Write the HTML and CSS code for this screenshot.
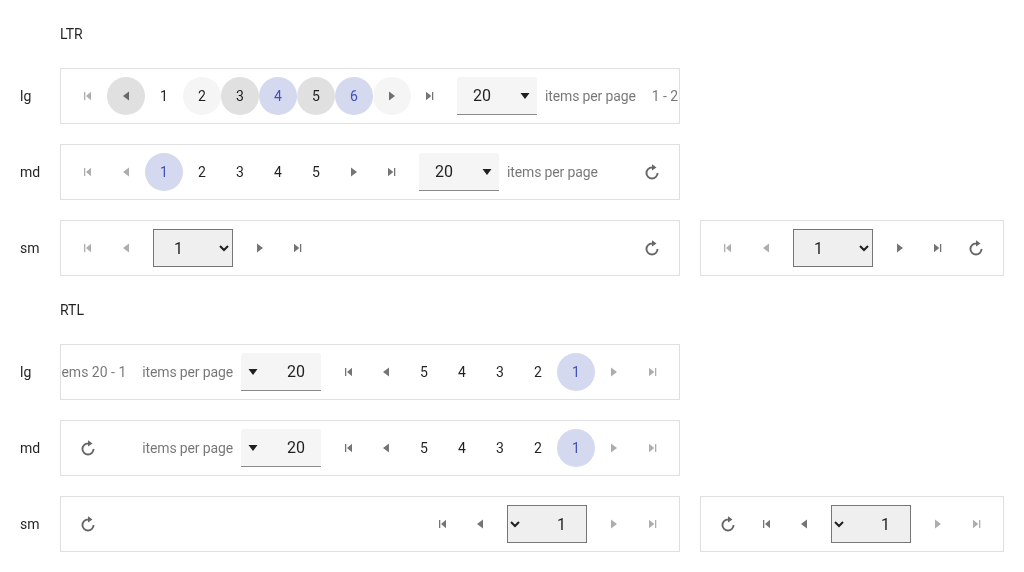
FILE: index.html
```html
<!DOCTYPE html>
<html>
<head>
	<title>Pager</title>
	<link rel="stylesheet" href="styles.css">
</head>
<body>

<svg class="sprite">
	<symbol id="i-first" viewBox="0 0 16 16"><path d="M4 4h1.3v8H4zM6 8l5-4.3v8.6z"/></symbol>
	<symbol id="i-prev" viewBox="0 0 16 16"><path d="M5 8l6-4.5v9z"/></symbol>
	<symbol id="i-next" viewBox="0 0 16 16"><path d="M11 8l-6-4.5v9z"/></symbol>
	<symbol id="i-last" viewBox="0 0 16 16"><path d="M10 4h1.3v8H10zM9.300 8L4 3.700v8.600z"/></symbol>
	<symbol id="i-reload" viewBox="0 0 16 16"><path d="M8 2.500A6.500 6.500 0 1 0 14.500 9H12.600A4.600 4.600 0 1 1 8 4.400zM8 .2L12.500 3.400 8 6.600z"/></symbol>
	<symbol id="i-down" viewBox="0 0 16 16"><path d="M3.500 5h9L8 11z"/></symbol>
</svg>

<div class="title">LTR</div>

<div class="row">
	<div class="size">lg</div>
	<div class="pager">
		<a class="btn off"><svg class="icon seek"><use href="#i-first"/></svg></a>
		<a class="btn hover"><svg class="icon"><use href="#i-prev"/></svg></a>
		<a class="btn">1</a>
		<a class="btn soft">2</a>
		<a class="btn hover">3</a>
		<a class="btn sel">4</a>
		<a class="btn hover">5</a>
		<a class="btn sel">6</a>
		<a class="btn soft"><svg class="icon"><use href="#i-next"/></svg></a>
		<a class="btn"><svg class="icon seek"><use href="#i-last"/></svg></a>
		<div class="drop">20<svg class="icon"><use href="#i-down"/></svg></div>
		<span class="per">items per page</span>
		<span class="info">1 - 20 items</span>
	</div>
</div>

<div class="row">
	<div class="size">md</div>
	<div class="pager">
		<a class="btn off"><svg class="icon seek"><use href="#i-first"/></svg></a>
		<a class="btn off"><svg class="icon"><use href="#i-prev"/></svg></a>
		<a class="btn sel">1</a>
		<a class="btn">2</a>
		<a class="btn">3</a>
		<a class="btn">4</a>
		<a class="btn">5</a>
		<a class="btn"><svg class="icon"><use href="#i-next"/></svg></a>
		<a class="btn"><svg class="icon seek"><use href="#i-last"/></svg></a>
		<div class="drop">20<svg class="icon"><use href="#i-down"/></svg></div>
		<span class="per">items per page</span>
		<a class="btn reload"><svg class="icon"><use href="#i-reload"/></svg></a>
	</div>
</div>

<div class="row">
	<div class="size">sm</div>
	<div class="pager">
		<a class="btn off"><svg class="icon seek"><use href="#i-first"/></svg></a>
		<a class="btn off"><svg class="icon"><use href="#i-prev"/></svg></a>
		<select class="native"><option>1</option><option>2</option></select>
		<a class="btn"><svg class="icon"><use href="#i-next"/></svg></a>
		<a class="btn"><svg class="icon seek"><use href="#i-last"/></svg></a>
		<a class="btn reload"><svg class="icon"><use href="#i-reload"/></svg></a>
	</div>
	<div class="pager small">
		<a class="btn off"><svg class="icon seek"><use href="#i-first"/></svg></a>
		<a class="btn off"><svg class="icon"><use href="#i-prev"/></svg></a>
		<select class="native"><option>1</option><option>2</option></select>
		<a class="btn"><svg class="icon"><use href="#i-next"/></svg></a>
		<a class="btn"><svg class="icon seek"><use href="#i-last"/></svg></a>
		<a class="btn reload"><svg class="icon"><use href="#i-reload"/></svg></a>
	</div>
</div>

<div class="title">RTL</div>

<div class="row">
	<div class="size">lg</div>
	<div class="pager" dir="rtl">
		<a class="btn off"><svg class="icon seek"><use href="#i-last"/></svg></a>
		<a class="btn off"><svg class="icon"><use href="#i-next"/></svg></a>
		<a class="btn sel">1</a>
		<a class="btn">2</a>
		<a class="btn">3</a>
		<a class="btn">4</a>
		<a class="btn">5</a>
		<a class="btn"><svg class="icon"><use href="#i-prev"/></svg></a>
		<a class="btn"><svg class="icon seek"><use href="#i-first"/></svg></a>
		<div class="drop">20<svg class="icon"><use href="#i-down"/></svg></div>
		<span class="per">items per page</span>
		<span class="info">1 - 20 items</span>
	</div>
</div>

<div class="row">
	<div class="size">md</div>
	<div class="pager" dir="rtl">
		<a class="btn off"><svg class="icon seek"><use href="#i-last"/></svg></a>
		<a class="btn off"><svg class="icon"><use href="#i-next"/></svg></a>
		<a class="btn sel">1</a>
		<a class="btn">2</a>
		<a class="btn">3</a>
		<a class="btn">4</a>
		<a class="btn">5</a>
		<a class="btn"><svg class="icon"><use href="#i-prev"/></svg></a>
		<a class="btn"><svg class="icon seek"><use href="#i-first"/></svg></a>
		<div class="drop">20<svg class="icon"><use href="#i-down"/></svg></div>
		<span class="per">items per page</span>
		<a class="btn reload"><svg class="icon"><use href="#i-reload"/></svg></a>
	</div>
</div>

<div class="row">
	<div class="size">sm</div>
	<div class="pager" dir="rtl">
		<a class="btn off"><svg class="icon seek"><use href="#i-last"/></svg></a>
		<a class="btn off"><svg class="icon"><use href="#i-next"/></svg></a>
		<select class="native"><option>1</option><option>2</option></select>
		<a class="btn"><svg class="icon"><use href="#i-prev"/></svg></a>
		<a class="btn"><svg class="icon seek"><use href="#i-first"/></svg></a>
		<a class="btn reload"><svg class="icon"><use href="#i-reload"/></svg></a>
	</div>
	<div class="pager small" dir="rtl">
		<a class="btn off"><svg class="icon seek"><use href="#i-last"/></svg></a>
		<a class="btn off"><svg class="icon"><use href="#i-next"/></svg></a>
		<select class="native"><option>1</option><option>2</option></select>
		<a class="btn"><svg class="icon"><use href="#i-prev"/></svg></a>
		<a class="btn"><svg class="icon seek"><use href="#i-first"/></svg></a>
		<a class="btn reload"><svg class="icon"><use href="#i-reload"/></svg></a>
	</div>
</div>

</body>
</html>
```

FILE: styles.css
```css
html, body {margin: 0; background: #fff;}
body {padding: 24px 20px 20px; height: 572px; box-sizing: border-box; overflow: hidden; font-family: Roboto, "Liberation Sans", sans-serif; font-size: 14px; line-height: 20px; color: rgba(0,0,0,.87); will-change: transform;}

.sprite {display: none;}

.title {margin-left: 40px; margin-bottom: 24px;}
.row {display: flex; align-items: center; margin-bottom: 20px;}
.row:has(+ .title) {margin-bottom: 24px;}
.size {width: 40px; flex: none;}

.pager {width: 620px; height: 56px; flex: none; box-sizing: border-box; display: flex; align-items: center; padding: 8px; border: 1px solid #e0e0e0; overflow: hidden; white-space: nowrap;}
.pager.small {width: 304px; margin-left: 20px;}

.btn {width: 38px; height: 38px; flex: none; display: flex; align-items: center; justify-content: center; border-radius: 50%; color: rgba(0,0,0,.87);}
.btn .icon {color: rgba(0,0,0,.54);}
.btn.off .icon {color: rgba(0,0,0,.32);}
.btn.soft {background: #f5f5f5;}
.btn.hover {background: #e0e0e0;}
.btn.sel {background: #d5d9f0; color: #3f51b5;}
.btn.reload {margin-inline-start: auto;}
.btn.reload .icon {color: rgba(0,0,0,.6);}

.icon {width: 16px; height: 16px; display: block; fill: currentColor; flex: none;}
[dir=rtl] .icon.seek {transform: translateX(1px);}

.drop {width: 80px; height: 38px; flex: none; box-sizing: border-box; margin: 0 8px; padding-inline: 16px 4px; display: flex; align-items: center; justify-content: space-between; background: #f5f5f5; border-bottom: 1px solid #8a8a8a; border-radius: 3px 3px 0 0; font-size: 16px;}

.per {color: rgba(0,0,0,.54); flex: none; letter-spacing: -.14px;}
.info {color: rgba(0,0,0,.54); flex: none; margin-inline-start: 16px;}

.native {width: 80px; height: 38px; flex: none; margin: 0 8px; padding: 0 16px; font-family: inherit; font-size: 16px; color: rgba(0,0,0,.87); background: #efefef; border: 1px solid #767676; border-radius: 0;}
```
